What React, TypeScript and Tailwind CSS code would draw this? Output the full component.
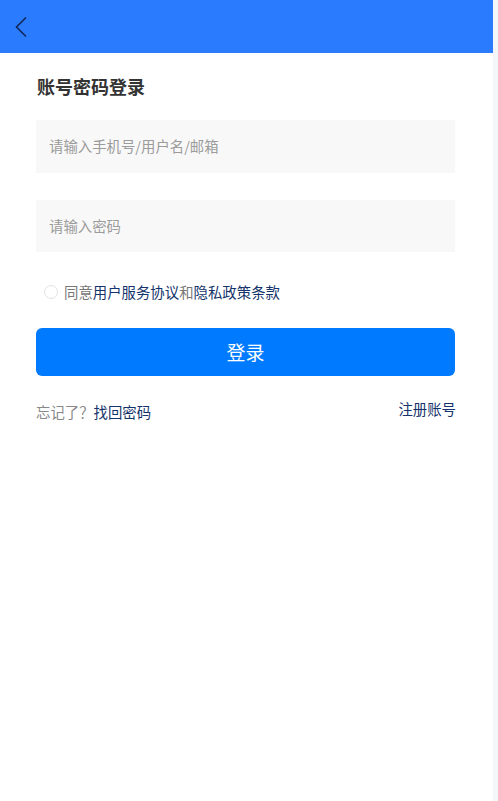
import { useState } from "react";

const font = { fontFamily: '"Noto Sans CJK SC", "Noto Sans", sans-serif' };

export default function App() {
  const [account, setAccount] = useState("");
  const [password, setPassword] = useState("");
  const [agreed, setAgreed] = useState(false);

  return (
    <div className="flex min-h-[801px] w-[498px] bg-white" style={font}>
      <div className="w-[493px]">
        <header className="flex h-[53px] items-center bg-[#2a7bfd] pl-[14px]">
          <svg width="14" height="22" viewBox="0 0 14 22" fill="none">
            <path d="M12 1.5 L2.5 11 L12 20.5" stroke="#14275a" strokeWidth="1.6" />
          </svg>
        </header>

        <div className="px-[36px]">
          <h1 className="mt-[20px] pl-px text-[18px] font-bold leading-[26px] text-[#333]">
            账号密码登录
          </h1>

          <input
            value={account}
            onChange={(e) => setAccount(e.target.value)}
            placeholder="请输入手机号/用户名/邮箱"
            className="mt-[21px] block h-[53px] w-[419px] bg-[#f8f8f8] px-[13px] pb-[2px] text-[14.4px] text-[#333] outline-none placeholder:text-[#9b9b9b]"
          />
          <input
            type="password"
            value={password}
            onChange={(e) => setPassword(e.target.value)}
            placeholder="请输入密码"
            className="mt-[27px] block h-[52px] w-[419px] bg-[#f8f8f8] px-[13px] pb-[2px] text-[14.4px] text-[#333] outline-none placeholder:text-[#9b9b9b]"
          />

          <label className="mt-[30px] flex items-center pl-[8px] text-[14.4px] leading-[20px] text-[#777]">
            <button
              type="button"
              onClick={() => setAgreed(!agreed)}
              className={`mr-[6px] h-[14px] w-[14px] rounded-full border ${agreed ? "border-[#007aff] bg-[#007aff]" : "border-[#e2e2e2] bg-white"}`}
            />
            同意<span className="text-[#14336b]">用户服务协议</span>和
            <span className="text-[#14336b]">隐私政策条款</span>
          </label>

          <button
            type="button"
            className="mt-[26px] flex h-[48px] w-[419px] items-center justify-center rounded-[6px] bg-[#007bff] text-[19px] text-white"
          >
            登录
          </button>

          <div className="mt-[23px] flex items-start justify-between text-[14.4px] leading-[20px]">
            <div className="mt-[3px] text-[#888]">
              忘记了？<span className="text-[#14336b]">找回密码</span>
            </div>
            <span className="mr-[1px] text-[#14336b]">注册账号</span>
          </div>
        </div>
      </div>
      <div className="w-[5px] bg-[#f5f6fa]" />
    </div>
  );
}
